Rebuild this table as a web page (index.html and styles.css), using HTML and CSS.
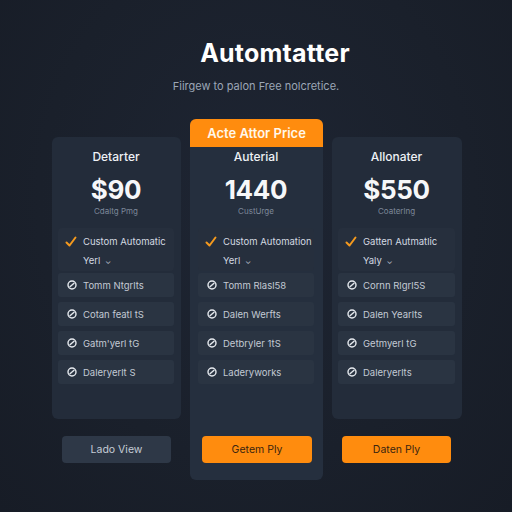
FILE: index.html
```html
<!DOCTYPE html>
<html lang="en">
<head>
<meta charset="utf-8">
<title>Automtatter</title>
<link rel="stylesheet" href="styles.css">
</head>
<body>
<main class="page">
  <h1 class="title">Automtatter</h1>
  <p class="subtitle">Fiirgew to palon Free nolcretice.</p>

  <section class="plans">
    <div class="col side">
      <div class="card">
        <h2 class="plan-name">Detarter</h2>
        <div class="price">$90</div>
        <div class="price-note">Cdaltg Pmg</div>
        <div class="feature-main">
          <div class="check-line"><svg class="check" viewBox="0 0 12 12"><path d="M1.5 6.5 L4.5 9.5 L10.5 1.5"/></svg><span>Custom Automatic</span></div>
          <div class="select-line">Yerl <span class="chev">⌄</span></div>
        </div>
        <ul class="rows">
          <li class="row"><svg class="ico" viewBox="0 0 10 10"><circle cx="5" cy="5" r="4"/><path d="M3 6.8 L7 3.2"/></svg>Tomm Ntgrlts</li>
          <li class="row"><svg class="ico" viewBox="0 0 10 10"><circle cx="5" cy="5" r="4"/><path d="M3 6.8 L7 3.2"/></svg>Cotan featl tS</li>
          <li class="row"><svg class="ico" viewBox="0 0 10 10"><circle cx="5" cy="5" r="4"/><path d="M3 6.8 L7 3.2"/></svg>Gatm'yerl tG</li>
          <li class="row"><svg class="ico" viewBox="0 0 10 10"><circle cx="5" cy="5" r="4"/><path d="M3 6.8 L7 3.2"/></svg>Daleryerlt S</li>
        </ul>
      </div>
      <button class="btn btn-muted">Lado View</button>
    </div>

    <div class="col featured">
      <div class="badge">Acte Attor Price</div>
      <div class="card-body">
        <h2 class="plan-name">Auterial</h2>
        <div class="price">1440</div>
        <div class="price-note">CustUrge</div>
        <div class="feature-main">
          <div class="check-line"><svg class="check" viewBox="0 0 12 12"><path d="M1.5 6.5 L4.5 9.5 L10.5 1.5"/></svg><span>Custom Automation</span></div>
          <div class="select-line">Yerl <span class="chev">⌄</span></div>
        </div>
        <ul class="rows">
          <li class="row"><svg class="ico" viewBox="0 0 10 10"><circle cx="5" cy="5" r="4"/><path d="M3 6.8 L7 3.2"/></svg>Tomm Rlasl58</li>
          <li class="row"><svg class="ico" viewBox="0 0 10 10"><circle cx="5" cy="5" r="4"/><path d="M3 6.8 L7 3.2"/></svg>Dalen Werfts</li>
          <li class="row"><svg class="ico" viewBox="0 0 10 10"><circle cx="5" cy="5" r="4"/><path d="M3 6.8 L7 3.2"/></svg>Detbryler 1tS</li>
          <li class="row"><svg class="ico" viewBox="0 0 10 10"><circle cx="5" cy="5" r="4"/><path d="M3 6.8 L7 3.2"/></svg>Laderyworks</li>
        </ul>
        <button class="btn btn-orange">Getem Ply</button>
      </div>
    </div>

    <div class="col side">
      <div class="card">
        <h2 class="plan-name">Allonater</h2>
        <div class="price">$550</div>
        <div class="price-note">Coaterlng</div>
        <div class="feature-main">
          <div class="check-line"><svg class="check" viewBox="0 0 12 12"><path d="M1.5 6.5 L4.5 9.5 L10.5 1.5"/></svg><span>Gatten Autmatlic</span></div>
          <div class="select-line">Yaly <span class="chev">⌄</span></div>
        </div>
        <ul class="rows">
          <li class="row"><svg class="ico" viewBox="0 0 10 10"><circle cx="5" cy="5" r="4"/><path d="M3 6.8 L7 3.2"/></svg>Cornn Rlgrl5S</li>
          <li class="row"><svg class="ico" viewBox="0 0 10 10"><circle cx="5" cy="5" r="4"/><path d="M3 6.8 L7 3.2"/></svg>Dalen Yearlts</li>
          <li class="row"><svg class="ico" viewBox="0 0 10 10"><circle cx="5" cy="5" r="4"/><path d="M3 6.8 L7 3.2"/></svg>Getmyerl tG</li>
          <li class="row"><svg class="ico" viewBox="0 0 10 10"><circle cx="5" cy="5" r="4"/><path d="M3 6.8 L7 3.2"/></svg>Daleryerlts</li>
        </ul>
      </div>
      <button class="btn btn-orange">Daten Ply</button>
    </div>
  </section>
</main>
</body>
</html>
```

FILE: styles.css
```css
* { box-sizing: border-box; }

html, body {
  margin: 0;
  padding: 0;
}

body {
  width: 512px;
  height: 512px;
  overflow: hidden;
  background: radial-gradient(ellipse at 50% 40%, #1e2533 0%, #1a202b 60%, #171c26 100%);
  font-family: Inter, "Noto Sans", "Liberation Sans", sans-serif;
  color: #e8ecf2;
}

.page {
  display: flex;
  flex-direction: column;
  padding-top: 38px;
}

.title {
  margin: 0 0 0 38px;
  align-self: center;
  font-size: 25px;
  line-height: 30px;
  font-weight: 700;
  color: #ffffff;
  letter-spacing: 0.2px;
}

.subtitle {
  margin: 11px 0 0 0;
  align-self: center;
  font-size: 11px;
  line-height: 14px;
  color: #9ba6b6;
}

.plans {
  margin: 26px 0 0 52px;
  display: grid;
  grid-template-columns: 129px 133px 130px;
  column-gap: 9px;
  align-items: start;
}

.col {
  display: flex;
  flex-direction: column;
}

.side {
  padding-top: 18px;
}

.card {
  height: 282px;
  background: #232c3a;
  border-radius: 6px;
  padding: 12px 7px 0 6px;
  display: flex;
  flex-direction: column;
  align-items: stretch;
}

.featured {
  background: #252f3e;
  border-radius: 6px;
  height: 361px;
}

.badge {
  height: 28px;
  background: #ff8c0e;
  border-radius: 6px 6px 0 0;
  color: #fff7ea;
  font-size: 13px;
  font-weight: 600;
  line-height: 28px;
  text-align: center;
}

.card-body {
  padding: 2px 9px 0 8px;
  display: flex;
  flex-direction: column;
}

.plan-name {
  margin: 0;
  text-align: center;
  font-size: 12px;
  line-height: 16px;
  font-weight: 500;
  color: #eef1f5;
}

.price {
  margin-top: 9px;
  text-align: center;
  font-size: 26px;
  line-height: 32px;
  font-weight: 700;
  color: #f6f7f9;
  letter-spacing: -0.3px;
}

.price-note {
  text-align: center;
  font-size: 8px;
  line-height: 10px;
  color: #7d8899;
}

.feature-main {
  margin-top: 12px;
  height: 43px;
  background: #262f3d;
  border-radius: 4px;
  padding: 7px 0 0 7px;
  display: flex;
  flex-direction: column;
}

.check-line {
  display: flex;
  align-items: center;
  gap: 6px;
  font-size: 9.5px;
  line-height: 14px;
  color: #d3d9e1;
  white-space: nowrap;
}

.check {
  width: 12px;
  height: 12px;
  fill: none;
  stroke: #f59a1e;
  stroke-width: 2;
  stroke-linecap: round;
  stroke-linejoin: round;
}

.select-line {
  margin: 5px 0 0 18px;
  font-size: 9.5px;
  line-height: 14px;
  color: #d3d9e1;
}

.chev {
  font-size: 8px;
  color: #aeb6c2;
  margin-left: 2px;
}

.rows {
  list-style: none;
  margin: 2px 0 0 0;
  padding: 0;
  display: flex;
  flex-direction: column;
  gap: 5px;
}

.row {
  height: 24px;
  background: #2a3442;
  border-radius: 3px;
  display: flex;
  align-items: center;
  gap: 6px;
  padding-left: 9px;
  font-size: 9.5px;
  color: #c3cad4;
  white-space: nowrap;
}

.ico {
  width: 10px;
  height: 10px;
  fill: none;
  stroke: #e6eaef;
  stroke-width: 1.4;
  stroke-linecap: round;
}

.btn {
  height: 27px;
  border: none;
  border-radius: 4px;
  font-family: inherit;
  font-size: 10.5px;
  line-height: 27px;
  padding: 0;
  cursor: pointer;
}

.side .btn {
  margin: 17px 0 0 10px;
  width: 109px;
}

.card-body .btn {
  margin: 52px 0 0 4px;
  width: 110px;
}

.btn-muted {
  background: #2e3847;
  color: #c5ccd6;
}

.btn-orange {
  background: #ff8c0e;
  color: #3a2410;
}
```
